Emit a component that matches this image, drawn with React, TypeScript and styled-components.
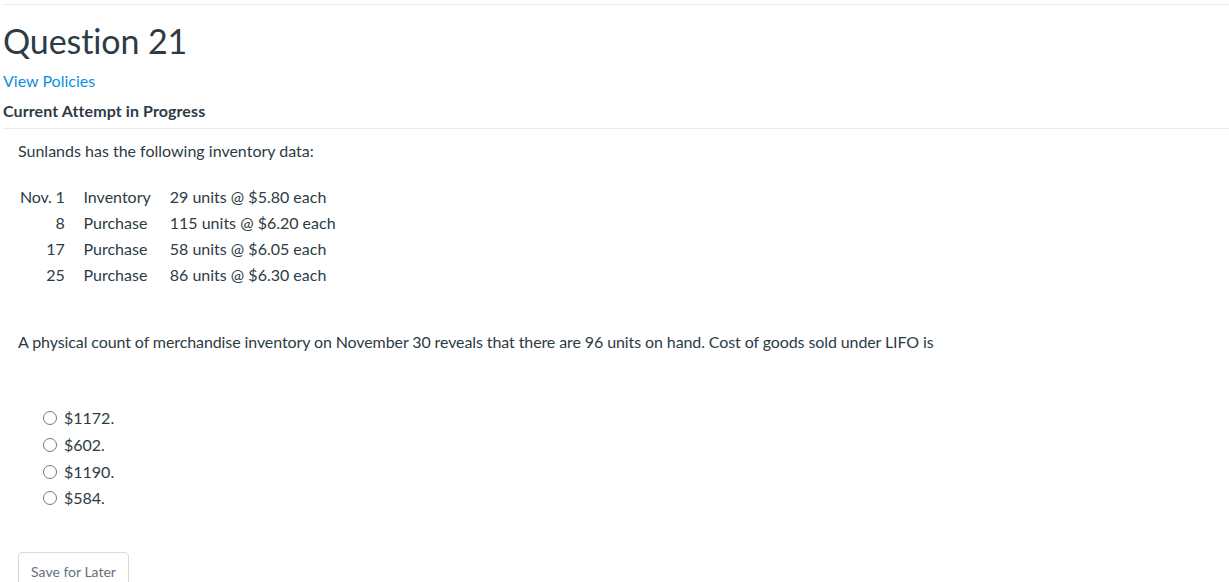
import React from 'react';
import styled, { createGlobalStyle } from 'styled-components';

const GlobalStyle = createGlobalStyle`
  body {
    margin: 0;
    background: #fff;
    font-family: Lato, "Open Sans", sans-serif;
    color: #2d3b45;
  }
`;

type Row = { date: string; kind: string; detail: string };

const rows: Row[] = [
  { date: 'Nov. 1', kind: 'Inventory', detail: '29 units @ $5.80 each' },
  { date: '8', kind: 'Purchase', detail: '115 units @ $6.20 each' },
  { date: '17', kind: 'Purchase', detail: '58 units @ $6.05 each' },
  { date: '25', kind: 'Purchase', detail: '86 units @ $6.30 each' },
];

const answers = ['$1172.', '$602.', '$1190.', '$584.'];

export default function App() {
  return (
    <Page>
      <GlobalStyle />
      <Header>
        <Title>Question 21</Title>
        <PolicyLink href="#">View Policies</PolicyLink>
        <Status>Current Attempt in Progress</Status>
      </Header>
      <Body>
        <Text>Sunlands has the following inventory data:</Text>
        <DataTable>
          <tbody>
            {rows.map((r) => (
              <tr key={r.date}>
                <DateCell>{r.date}</DateCell>
                <Cell>{r.kind}</Cell>
                <Cell>{r.detail}</Cell>
              </tr>
            ))}
          </tbody>
        </DataTable>
        <Prompt>
          A physical count of merchandise inventory on November 30 reveals that there are 96 units on
          hand. Cost of goods sold under LIFO is
        </Prompt>
        <Options>
          {answers.map((a) => (
            <Option key={a}>
              <Radio type="radio" name="q21" />
              <span>{a}</span>
            </Option>
          ))}
        </Options>
        <SaveButton>Save for Later</SaveButton>
      </Body>
    </Page>
  );
}

const Page = styled.div`
  padding-top: 4px;
  padding-left: 3px;
`;

const Header = styled.div`
  border-top: 1px solid #e8eaec;
  border-bottom: 1px solid #e8eaec;
  padding-bottom: 7px;
  display: flex;
  flex-direction: column;
  align-items: flex-start;
`;

const Title = styled.h1`
  margin: 14px 0 0 0;
  font-size: 34px;
  font-weight: 400;
  line-height: 44px;
  color: #2d3b45;
  letter-spacing: -0.1px;
`;

const PolicyLink = styled.a`
  margin-top: 8px;
  font-size: 16px;
  line-height: 20px;
  color: #0a8fe5;
  text-decoration: none;
`;

const Status = styled.div`
  margin-top: 10px;
  font-size: 16px;
  font-weight: 700;
  line-height: 20px;
  color: #2d3b45;
  letter-spacing: 0.1px;
`;

const Body = styled.div`
  padding: 12px 0 0 15px;
  font-size: 16px;
  color: #2d3b45;
`;

const Text = styled.p`
  margin: 0;
  line-height: 20px;
`;

const DataTable = styled.table`
  margin-top: 23px;
  border-collapse: collapse;
  font-size: 16px;
`;

const Cell = styled.td`
  padding: 0 0 0 19px;
  height: 26px;
  line-height: 20px;
  vertical-align: middle;
  white-space: nowrap;
`;

const DateCell = styled(Cell)`
  padding-left: 2px;
  text-align: right;
  letter-spacing: -0.2px;
`;

const Prompt = styled.p`
  margin: 44px 0 0 0;
  line-height: 20px;
  letter-spacing: -0.1px;
`;

const Options = styled.div`
  margin-top: 53px;
  padding-left: 25px;
  display: flex;
  flex-direction: column;
`;

const Option = styled.label`
  display: flex;
  align-items: center;
  gap: 7px;
  height: 26.7px;
  line-height: 20px;
`;

const Radio = styled.input`
  margin: 0;
  width: 14px;
  height: 14px;
`;

const SaveButton = styled.button`
  margin-top: 40px;
  padding: 10px 12px;
  font-family: Lato, "Open Sans", sans-serif;
  font-size: 14px;
  color: #66717a;
  background: #fff;
  border: 1px solid #d7dadd;
  border-radius: 4px;
  width: 111px;
  height: 40px;
`;
